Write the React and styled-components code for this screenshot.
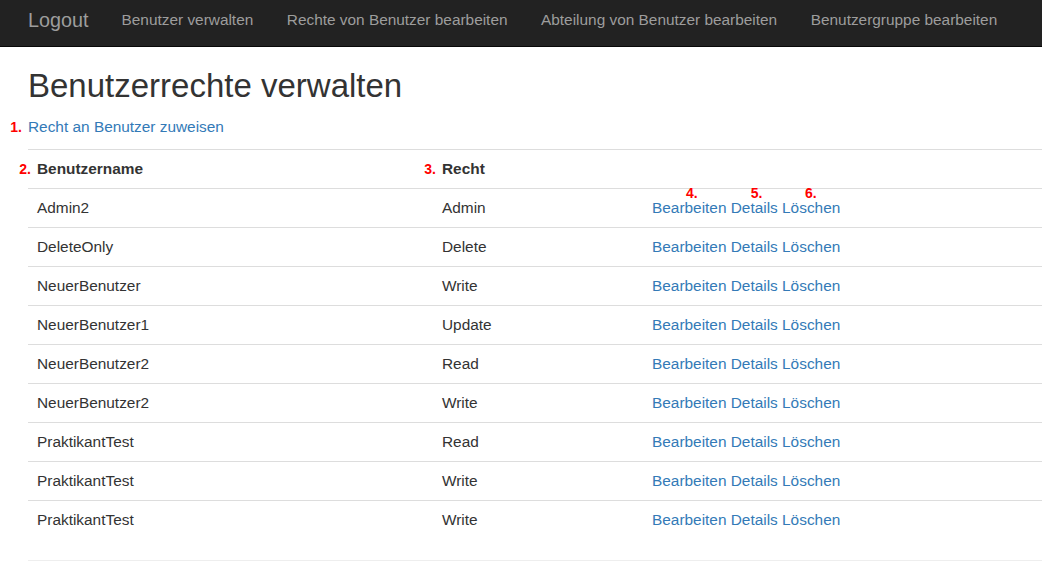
import React from "react";
import styled, { createGlobalStyle } from "styled-components";

const GlobalStyle = createGlobalStyle`
  body {
    margin: 0;
    font-family: "Liberation Sans", Arial, sans-serif;
    font-size: 15.4px;
    line-height: 22px;
    color: #333;
    background: #fff;
  }
`;

const rows = [
  { name: "Admin2", right: "Admin" },
  { name: "DeleteOnly", right: "Delete" },
  { name: "NeuerBenutzer", right: "Write" },
  { name: "NeuerBenutzer1", right: "Update" },
  { name: "NeuerBenutzer2", right: "Read" },
  { name: "NeuerBenutzer2", right: "Write" },
  { name: "PraktikantTest", right: "Read" },
  { name: "PraktikantTest", right: "Write" },
  { name: "PraktikantTest", right: "Write" },
];

const navItems = [
  "Benutzer verwalten",
  "Rechte von Benutzer bearbeiten",
  "Abteilung von Benutzer bearbeiten",
  "Benutzergruppe bearbeiten",
];

const Navbar = styled.nav`
  display: flex;
  height: 37px;
  padding-top: 9px;
  background: #222;
  border-bottom: 1px solid #080808;
`;

const Brand = styled.a`
  padding: 0 16.5px 0 28px;
  font-size: 19.8px;
  line-height: 22px;
  color: #9d9d9d;
  text-decoration: none;
`;

const NavLink = styled.a`
  padding: 0 17px 0 16.5px;
  line-height: 22px;
  color: #9d9d9d;
  text-decoration: none;
  white-space: nowrap;
`;

const Main = styled.main`
  padding-left: 28px;
`;

const Title = styled.h2`
  margin: 21px 0 0;
  font-size: 33px;
  line-height: 36.3px;
  font-weight: 500;
  color: #333;
`;

const LinkLine = styled.p`
  margin: 12px 0 11px;
`;

const Link = styled.a`
  position: relative;
  color: #337ab7;
  text-decoration: none;
`;

// red numbered annotations sitting over the page
const Marker = styled.span`
  position: absolute;
  font-size: 14px;
  line-height: 14px;
  font-weight: 700;
  color: #f00;
  white-space: nowrap;
  ${(p) =>
    p.$above
      ? `left: ${p.$left}px; top: -13px;`
      : `right: calc(100% + 6px); top: 2px;`}
`;

const Table = styled.table`
  width: 100%;
  border-collapse: collapse;
`;

const Th = styled.th`
  width: ${(p) => p.$w || "auto"};
  padding: 8px 9px;
  text-align: left;
  font-weight: 700;
  border-top: 1px solid #ddd;
`;

const Td = styled.td`
  padding: 8px 9px;
  border-top: 1px solid #ddd;
  white-space: nowrap;
`;

const Label = styled.span`
  position: relative;
`;

const Rule = styled.hr`
  margin: 21px 0 0;
  border: 0;
  border-top: 1px solid #eee;
`;

function Actions({ marked }) {
  return (
    <>
      <Link href="#">
        {marked && (
          <Marker $above $left={34}>
            4.
          </Marker>
        )}
        Bearbeiten
      </Link>{" "}
      <Link href="#">
        {marked && (
          <Marker $above $left={20}>
            5.
          </Marker>
        )}
        Details
      </Link>{" "}
      <Link href="#">
        {marked && (
          <Marker $above $left={23}>
            6.
          </Marker>
        )}
        Löschen
      </Link>
    </>
  );
}

export default function App() {
  return (
    <>
      <GlobalStyle />
      <Navbar>
        <Brand href="#">Logout</Brand>
        {navItems.map((n) => (
          <NavLink key={n} href="#">
            {n}
          </NavLink>
        ))}
      </Navbar>
      <Main>
        <Title>Benutzerrechte verwalten</Title>
        <LinkLine>
          <Link href="#">
            <Marker>1.</Marker>
            Recht an Benutzer zuweisen
          </Link>
        </LinkLine>
        <Table>
          <thead>
            <tr>
              <Th $w="387px">
                <Label>
                  <Marker>2.</Marker>
                  Benutzername
                </Label>
              </Th>
              <Th $w="192px">
                <Label>
                  <Marker>3.</Marker>
                  Recht
                </Label>
              </Th>
              <Th />
            </tr>
          </thead>
          <tbody>
            {rows.map((r, i) => (
              <tr key={i}>
                <Td>{r.name}</Td>
                <Td>{r.right}</Td>
                <Td>
                  <Actions marked={i === 0} />
                </Td>
              </tr>
            ))}
          </tbody>
        </Table>
        <Rule />
      </Main>
    </>
  );
}
